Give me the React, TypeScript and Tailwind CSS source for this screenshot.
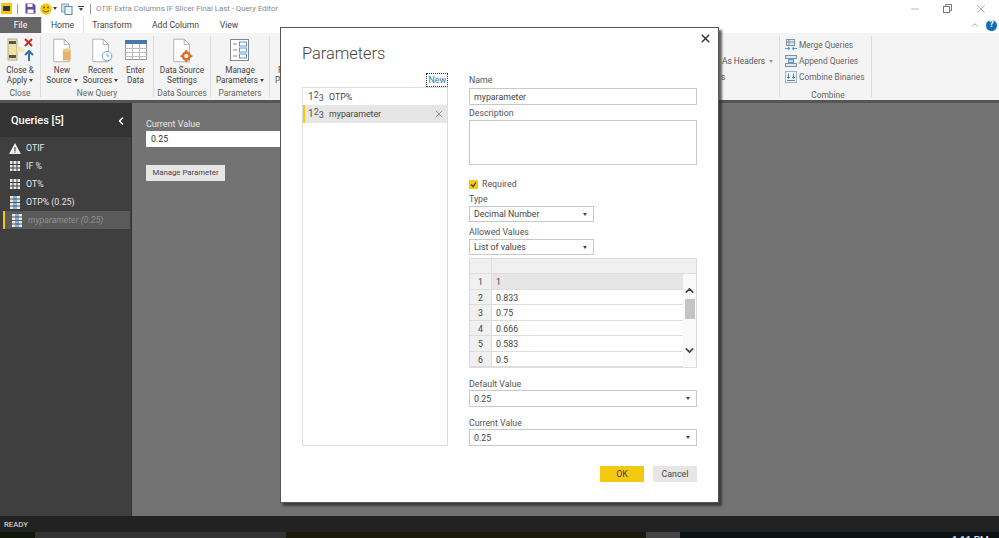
import { ChevronDown, ChevronLeft, ChevronUp, Minus, X } from "lucide-react";

const font = { fontFamily: 'Roboto, "Open Sans", sans-serif' };

function Caret({ className = "" }: { className?: string }) {
  return <span className={`inline-block w-0 h-0 border-x-[2.5px] border-x-transparent border-t-[3px] border-t-[#444] ${className}`} />;
}

function PageIcon({ children }: { children?: React.ReactNode }) {
  return (
    <svg width="32" height="26" viewBox="0 0 32 30">
      <path d="M6.5 2.5h12l6 6v20h-18z" fill="#fff" stroke="#a8a8a8" />
      <path d="M18.5 2.5v6h6" fill="none" stroke="#a8a8a8" />
      {children}
    </svg>
  );
}

function TableIcon({ size = 12, dark = false }: { size?: number; dark?: boolean }) {
  const c = dark ? "#3f3f3f" : "#a9a9a9";
  return (
    <svg width={size} height={size} viewBox="0 0 12 12">
      <rect x="0" y="0" width="12" height="12" fill={dark ? "#e8e8e8" : "#fff"} />
      <path d="M0 .5h12M0 4.5h12M0 8h12M4 0v12M8 0v12M.5 0v12M11.5 0v12M0 11.5h12" stroke={c} strokeWidth="1" fill="none" />
    </svg>
  );
}

function RibbonButton({ lines, caret, icon, width }: { lines: string[]; caret?: boolean; icon: React.ReactNode; width: string }) {
  return (
    <div className={`flex flex-col items-center ${width}`}>
      <div className="h-[26px] flex items-center justify-center">{icon}</div>
      <div className="text-[8.2px] leading-[10px] text-[#444] text-center mt-[2px] whitespace-nowrap">
        <div>{lines[0]}</div>
        <div>
          {lines[1]}
          {caret && <Caret className="ml-[2px] mb-[1px]" />}
        </div>
      </div>
    </div>
  );
}

function RibbonGroup({ label, width, children }: { label: string; width: string; children: React.ReactNode }) {
  return (
    <div className={`${width} shrink-0 flex flex-col border-r border-[#dcdcdc] my-[3px]`}>
      <div className="flex justify-center gap-[1px] h-[53px] shrink-0 pt-[1px]">{children}</div>
      <div className="text-[8.4px] leading-[8px] text-[#666] text-center whitespace-nowrap">{label}</div>
    </div>
  );
}

function QueryRow({ label, icon, active }: { label: string; icon: React.ReactNode; active?: boolean }) {
  return (
    <div className={`h-[18px] ml-[3px] mr-[1px] flex items-center gap-[4px] pl-[5px] text-[8.8px] ${active ? "bg-[#5a5a5a] border-l-2 border-[#f2c811] pl-[3px] text-[#8f8f8f] italic" : "text-[#e6e6e6]"}`}>
      <span className="w-[13px] flex justify-center">{icon}</span>
      <span className="ml-[1px] pt-[2px] whitespace-nowrap">{label}</span>
    </div>
  );
}

function ParamIcon() {
  return (
    <svg width="10" height="13" viewBox="0 0 10 13">
      <rect width="10" height="13" fill="#e8e8e8" />
      <rect x="3" y="0" width="4" height="13" fill="#7fb2dc" />
      <path d="M0 3h10M0 6.5h10M0 10h10" stroke="#555" strokeWidth="1" />
    </svg>
  );
}

function Num123() {
  return (
    <span className="text-[#555] text-[10px] leading-none whitespace-nowrap w-[14px] inline-block">
      1<span className="relative top-[-2px] text-[9px]">2</span>
      <span className="relative top-[1px] text-[9px]">3</span>
    </span>
  );
}

function Select({ value, width, className = "" }: { value: string; width: string; className?: string }) {
  return (
    <div className={`${width} border border-[#c8c8c8] flex items-center justify-between pl-[4px] pr-[6px] text-[8.8px] text-[#444] bg-white ${className}`}>
      <span className="pt-[2px]">{value}</span>
      <Caret />
    </div>
  );
}

const rows = ["1", "0.833", "0.75", "0.666", "0.583", "0.5"];

function Label({ children, className = "" }: { children: React.ReactNode; className?: string }) {
  return <div className={`text-[8.8px] leading-[13px] text-[#555] ${className}`}>{children}</div>;
}

export default function App() {
  return (
    <div className="relative w-[999px] h-[538px] overflow-hidden flex flex-col bg-white" style={font}>
      {/* title bar */}
      <div className="h-[17px] flex items-center shrink-0 pl-[1px] text-[7.8px] text-[#8a8a8a]">
        <span className="w-[11px] h-[11px] bg-[#f2c811] flex items-center justify-center">
          <span className="w-[7px] h-[5px] bg-[#333]" />
        </span>
        <span className="w-px h-[10px] bg-[#999] ml-[5px]" />
        <svg className="ml-[7px]" width="11" height="11" viewBox="0 0 11 11">
          <path d="M.5.5h8l2 2v8H.5z" fill="#6a4a9c" />
          <rect x="2.5" y="1" width="5" height="3" fill="#fff" />
          <rect x="2.5" y="6.5" width="6" height="3.5" fill="#fff" />
        </svg>
        <svg className="ml-[4px]" width="12" height="12" viewBox="0 0 12 12">
          <circle cx="6" cy="6" r="5.7" fill="#f2c811" />
          <circle cx="4" cy="4.5" r="0.9" fill="#6b5300" />
          <circle cx="8" cy="4.5" r="0.9" fill="#6b5300" />
          <path d="M3 7.2c1.5 2.3 4.5 2.3 6 0" stroke="#6b5300" fill="none" />
        </svg>
        <Caret className="ml-[1px]" />
        <svg className="ml-[4px]" width="12" height="12" viewBox="0 0 12 12">
          <rect x="0.5" y="1" width="7" height="8" fill="#cfdcea" stroke="#8aa4c0" />
          <rect x="4" y="3.5" width="7" height="8" fill="#eef3f8" stroke="#5f86ad" />
        </svg>
        <span className="ml-[5px] flex flex-col items-center gap-[1px]">
          <span className="w-[6px] h-px bg-[#333]" />
          <Caret />
        </span>
        <span className="w-px h-[10px] bg-[#999] ml-[6px]" />
        <span className="ml-[5px] whitespace-nowrap">OTIF Extra Columns IF Slicer Final Last - Query Editor</span>
        <div className="ml-auto flex items-center text-[#777]">
          <Minus size={12} strokeWidth={1} />
          <svg className="ml-[22px]" width="9" height="9" viewBox="0 0 9 9" fill="none" stroke="#777">
            <rect x="0.5" y="2.5" width="6" height="6" />
            <path d="M2.5 2.5v-2h6v6h-2" />
          </svg>
          <X className="ml-[22px] mr-[11px]" size={14} strokeWidth={1} />
        </div>
      </div>

      {/* tabs */}
      <div className="h-[16px] flex items-stretch shrink-0 text-[8.6px] text-[#444]">
        <div className="w-[41px] bg-[#666] text-white flex items-center justify-center">File</div>
        <div className="w-[43px] flex items-center justify-center border-x border-[#ddd]">Home</div>
        <div className="ml-[5px] w-[46px] flex items-center justify-center whitespace-nowrap">Transform</div>
        <div className="ml-[17px] w-[47px] flex items-center justify-center whitespace-nowrap">Add Column</div>
        <div className="ml-[20px] w-[20px] flex items-center justify-center">View</div>
        <div className="ml-auto flex items-center pr-[1px]">
          <ChevronUp size={10} className="text-[#999] mr-[6px]" />
          <span className="w-[11px] h-[11px] mr-[1px] rounded-full bg-[#0f6cbd] text-white text-[9px] font-bold flex items-center justify-center">?</span>
        </div>
      </div>

      {/* ribbon */}
      <div className="h-[67px] shrink-0 bg-[#f4f4f4] flex overflow-hidden">
        <RibbonGroup label="Close" width="w-[41px]">
          <RibbonButton
            width="w-[40px]"
            lines={["Close &", "Apply"]}
            caret
            icon={
              <svg width="30" height="24" viewBox="0 0 30 24">
                <rect x="3" y="1" width="9" height="21" fill="#f4e39e" stroke="#aaa" />
                <rect x="4" y="3" width="7" height="3" fill="#555" />
                <rect x="4" y="17" width="7" height="3" fill="#555" />
                <path d="M12 7l7 4v3h-7z" fill="#f7e8a8" />
                <path d="M20 1l7 7M27 1l-7 7" stroke="#c8281e" strokeWidth="2" />
                <path d="M24 23v-9M20 17l4-4 4 4" stroke="#2e75b6" strokeWidth="2" fill="none" />
              </svg>
            }
          />
        </RibbonGroup>
        <RibbonGroup label="New Query" width="w-[113px]">
          <RibbonButton
            width="w-[37px]"
            lines={["New", "Source"]}
            caret
            icon={
              <PageIcon>
                <path d="M17 15h9v12h-9z" fill="#e2b36a" />
                <ellipse cx="21.5" cy="15" rx="4.5" ry="2" fill="#eecb92" />
              </PageIcon>
            }
          />
          <RibbonButton
            width="w-[38px]"
            lines={["Recent", "Sources"]}
            caret
            icon={
              <PageIcon>
                <circle cx="23" cy="22" r="5.5" fill="#fff" stroke="#5b9bd5" />
                <path d="M23 19v3h3" stroke="#5b9bd5" fill="none" />
              </PageIcon>
            }
          />
          <RibbonButton
            width="w-[30px]"
            lines={["Enter", "Data"]}
            icon={
              <svg width="22" height="20" viewBox="0 0 22 20">
                <rect x="0.5" y="0.5" width="21" height="19" fill="#fff" stroke="#999" />
                <rect x="0" y="0" width="22" height="4" fill="#4a78a8" />
                <path d="M0 8.5h22M0 12.5h22M0 16.5h22M7.5 4v16M14.5 4v16" stroke="#bbb" />
              </svg>
            }
          />
        </RibbonGroup>
        <RibbonGroup label="Data Sources" width="w-[57px]">
          <RibbonButton
            width="w-[50px]"
            lines={["Data Source", "Settings"]}
            icon={
              <PageIcon>
                <circle cx="21" cy="22" r="4" fill="none" stroke="#d9722a" strokeWidth="3" />
                <path d="M21 15v3M21 26v3M14 22h3M25 22h3" stroke="#d9722a" strokeWidth="2" />
              </PageIcon>
            }
          />
        </RibbonGroup>
        <RibbonGroup label="Parameters" width="w-[59px]">
          <RibbonButton
            width="w-[52px]"
            lines={["Manage", "Parameters"]}
            caret
            icon={
              <svg width="22" height="24" viewBox="0 0 22 24">
                <rect x="1.5" y="1.5" width="18" height="21" fill="#fff" stroke="#888" />
                <path d="M4 6h4M4 12h4M4 18h4" stroke="#888" />
                <rect x="10.5" y="4" width="7" height="4" fill="#fff" stroke="#5b9bd5" />
                <rect x="10.5" y="10" width="7" height="4" fill="#fff" stroke="#5b9bd5" />
                <rect x="10.5" y="16" width="7" height="4" fill="#fff" stroke="#5b9bd5" />
              </svg>
            }
          />
        </RibbonGroup>
        <div className="w-[509px] shrink-0 relative text-[8.4px] text-[#555] whitespace-nowrap">
          <span className="absolute left-[8px] top-[32px] leading-[10px]">Refresh</span>
          <span className="absolute left-[5px] top-[42px] leading-[10px]">Preview</span>
          <span className="absolute left-[452px] top-[22px] flex items-center gap-[4px]">
            As Headers <Caret className="border-t-[#999]" />
          </span>
          <span className="absolute left-[451px] top-[38px]">s</span>
        </div>
        <div className="w-[93px] shrink-0 flex flex-col border-x border-[#dcdcdc] my-[3px] pl-[5px] pt-px text-[8.4px] leading-[16px] text-[#666]">
          <div className="flex items-center gap-[2px] whitespace-nowrap">
            <svg width="12" height="12" viewBox="0 0 12 12" fill="none">
              <rect x="1.5" y="0.5" width="8" height="6" fill="#dfe8f0" stroke="#7d93a8" />
              <path d="M1 3h9M4 0v6" stroke="#7d93a8" />
              <path d="M0 9.5h5M7 9.5h5M3 8l2 1.5L3 11M9 8L7 9.5 9 11" stroke="#5b9bd5" />
            </svg>
            Merge Queries
          </div>
          <div className="flex items-center gap-[2px] whitespace-nowrap">
            <svg width="12" height="12" viewBox="0 0 12 12" fill="none">
              <rect x="0.5" y="0.5" width="11" height="3" fill="#dfe8f0" stroke="#7d93a8" />
              <rect x="0.5" y="8.5" width="11" height="3" fill="#dfe8f0" stroke="#7d93a8" />
              <rect x="3.5" y="4.5" width="5" height="3" fill="#bcd3e8" stroke="#5b9bd5" />
            </svg>
            Append Queries
          </div>
          <div className="flex items-center gap-[2px] whitespace-nowrap">
            <svg width="12" height="12" viewBox="0 0 12 12" fill="none">
              <rect x="0.5" y="0.5" width="11" height="11" fill="#eef3f8" stroke="#9fb4c8" />
              <path d="M3.5 2.5v5M2 6l1.5 1.5L5 6M8.5 2.5v5M7 6l1.5 1.5L10 6M2 9.5h8" stroke="#5f86ad" />
            </svg>
            Combine Binaries
          </div>
          <div className="text-[8.4px] leading-[8px] text-center mt-[6px]">Combine</div>
        </div>
        <div className="flex-1" />
      </div>

      {/* main area */}
      <div className="h-[416px] shrink-0 flex border-t-[3px] border-[#555]">
        <div className="w-[131px] shrink-0 bg-[#3f3f3f] flex flex-col">
          <div className="h-[34px] shrink-0 bg-[#333] flex items-center justify-between pl-[11px] pr-[4px] pt-[2px] text-white text-[11px] font-medium">
            Queries [5]
            <ChevronLeft size={12} strokeWidth={3} />
          </div>
          <div className="mt-[2px]">
            <QueryRow
              label="OTIF"
              icon={
                <svg width="12" height="11" viewBox="0 0 12 11">
                  <path d="M6 0l6 11H0z" fill="#eee" />
                  <path d="M6 4v4M6 8.5v1" stroke="#333" />
                </svg>
              }
            />
            <QueryRow label="IF %" icon={<TableIcon dark />} />
            <QueryRow label="OT%" icon={<TableIcon dark />} />
            <QueryRow label="OTP% (0.25)" icon={<ParamIcon />} />
            <QueryRow label="myparameter (0.25)" icon={<ParamIcon />} active />
          </div>
        </div>
        <div className="flex-1 bg-[#737373] border-l border-[#333] pl-[14px] pt-[15px]">
          <div className="text-[9px] leading-[13px] text-[#e6e6e6]">Current Value</div>
          <div className="w-[300px] h-[16px] bg-white pl-[5px] pt-px flex items-center text-[8.8px] text-[#333]">0.25</div>
          <div className="w-[79px] h-[16px] mt-[18px] bg-[#e6e6e6] flex items-center justify-center text-[7.8px] text-[#444] whitespace-nowrap">Manage Parameter</div>
        </div>
      </div>

      {/* status bar */}
      <div className="h-[16px] shrink-0 bg-[#222] pl-[4px] pt-px text-[7.8px] text-[#e6e6e6] flex items-center">READY</div>

      {/* taskbar */}
      <div className="flex-1 flex bg-[#0c1214] overflow-hidden text-white text-[10px]">
        <div className="w-[35px] bg-[#12160c]" />
        <div className="w-[251px] bg-[#333]" />
        <div className="w-[360px] bg-[#1a1a0c]" />
        <div className="w-[34px] bg-[#444]" />
        <div className="ml-[272px] mt-[3px] leading-[12px] whitespace-nowrap">1:11 PM</div>
      </div>

      {/* dialog */}
      <div className="absolute left-[280px] top-[27px] w-[439px] h-[476px] bg-white border border-[#555] shadow-[3px_3px_2px_rgba(40,40,40,0.7)] flex">
        <X className="absolute right-[6px] top-[4px] text-[#333]" size={13} strokeWidth={2.5} />
        <div className="w-[167px] shrink-0 pl-[21px]">
          <div className="text-[16.4px] leading-[24px] font-light text-[#444] mt-[14px]">Parameters</div>
          <div className="flex justify-end mt-[7px]">
            <span className="border border-dotted border-[#333] text-[8.8px] leading-[12px] px-[1px] text-[#2e75b6]">New</span>
          </div>
          <div className="h-[359px] w-[146px] border border-[#ddd]">
            <div className="h-[17px] flex items-center gap-[7px] pl-[5px] text-[8.8px] text-[#444]">
              <Num123 />
              <span className="pt-[2px]">OTP%</span>
            </div>
            <div className="h-[18px] flex items-center gap-[7px] pl-[3px] pr-[2px] text-[8.8px] text-[#444] bg-[#e6e6e6] border-l-2 border-[#f2c811]">
              <Num123 />
              <span className="pt-[2px]">myparameter</span>
              <X className="ml-auto text-[#555]" size={12} strokeWidth={1.2} />
            </div>
          </div>
        </div>
        <div className="w-[228px] ml-[21px] pt-[46px]">
          <Label>Name</Label>
          <div className="h-[17px] border border-[#c8c8c8] pl-[4px] pt-[2px] flex items-center text-[8.8px] text-[#444] mt-[1px]">myparameter</div>
          <Label className="mt-[2px]">Description</Label>
          <div className="h-[45px] border border-[#c8c8c8]" />
          <div className="flex items-center gap-[4px] mt-[13px] h-[13px]">
            <span className="w-[9px] h-[9px] bg-[#f2c811] flex items-center justify-center">
              <svg width="7" height="7" viewBox="0 0 7 7">
                <path d="M1 3.5l2 2 3-4" stroke="#333" strokeWidth="1.2" fill="none" />
              </svg>
            </span>
            <span className="text-[8.8px] text-[#555]">Required</span>
          </div>
          <Label className="mt-[2px]">Type</Label>
          <Select value="Decimal Number" width="w-[125px]" className="h-[16px]" />
          <Label className="mt-[4px]">Allowed Values</Label>
          <Select value="List of values" width="w-[125px]" className="h-[16px]" />
          <div className="mt-[3px] h-[110px] border border-[#ddd] overflow-hidden">
            <div className="h-[15px] bg-[#f0f0f0] border-b border-[#ddd] flex">
              <div className="w-[22px] border-r border-[#ddd]" />
            </div>
            <div className="flex">
              <div className="flex-1">
                {rows.map((r, i) => (
                  <div key={r} className={`h-[15.5px] flex border-b border-[#ddd] text-[8.8px] leading-[16px] text-[#444] ${i === 0 ? "bg-[#e6e6e6]" : ""}`}>
                    <div className="w-[22px] bg-[#f0f0f0] text-center border-r border-[#ddd] shrink-0">{i + 1}</div>
                    <div className="pl-[4px]">{r}</div>
                  </div>
                ))}
              </div>
              <div className="w-[13px] shrink-0 flex flex-col items-center bg-[#f9f9f9] h-[94px]">
                <ChevronUp size={13} strokeWidth={3} className="text-[#444] mt-[10px]" />
                <div className="w-[10px] h-[20px] bg-[#c4c4c4] mt-[2px]" />
                <ChevronDown size={13} strokeWidth={3} className="text-[#444] mt-[25px]" />
              </div>
            </div>
          </div>
          <Label className="mt-[10px]">Default Value</Label>
          <Select value="0.25" width="w-full" className="h-[17px] -mt-px" />
          <Label className="mt-[10px]">Current Value</Label>
          <Select value="0.25" width="w-full" className="h-[17px] -mt-px" />
          <div className="flex justify-end gap-[9px] mt-[20px]">
            <div className="w-[44px] h-[16px] pt-px bg-[#f2c811] flex items-center justify-center text-[8.8px] text-[#444]">OK</div>
            <div className="w-[44px] h-[16px] pt-px bg-[#e6e6e6] flex items-center justify-center text-[8.8px] text-[#444]">Cancel</div>
          </div>
        </div>
      </div>
    </div>
  );
}
